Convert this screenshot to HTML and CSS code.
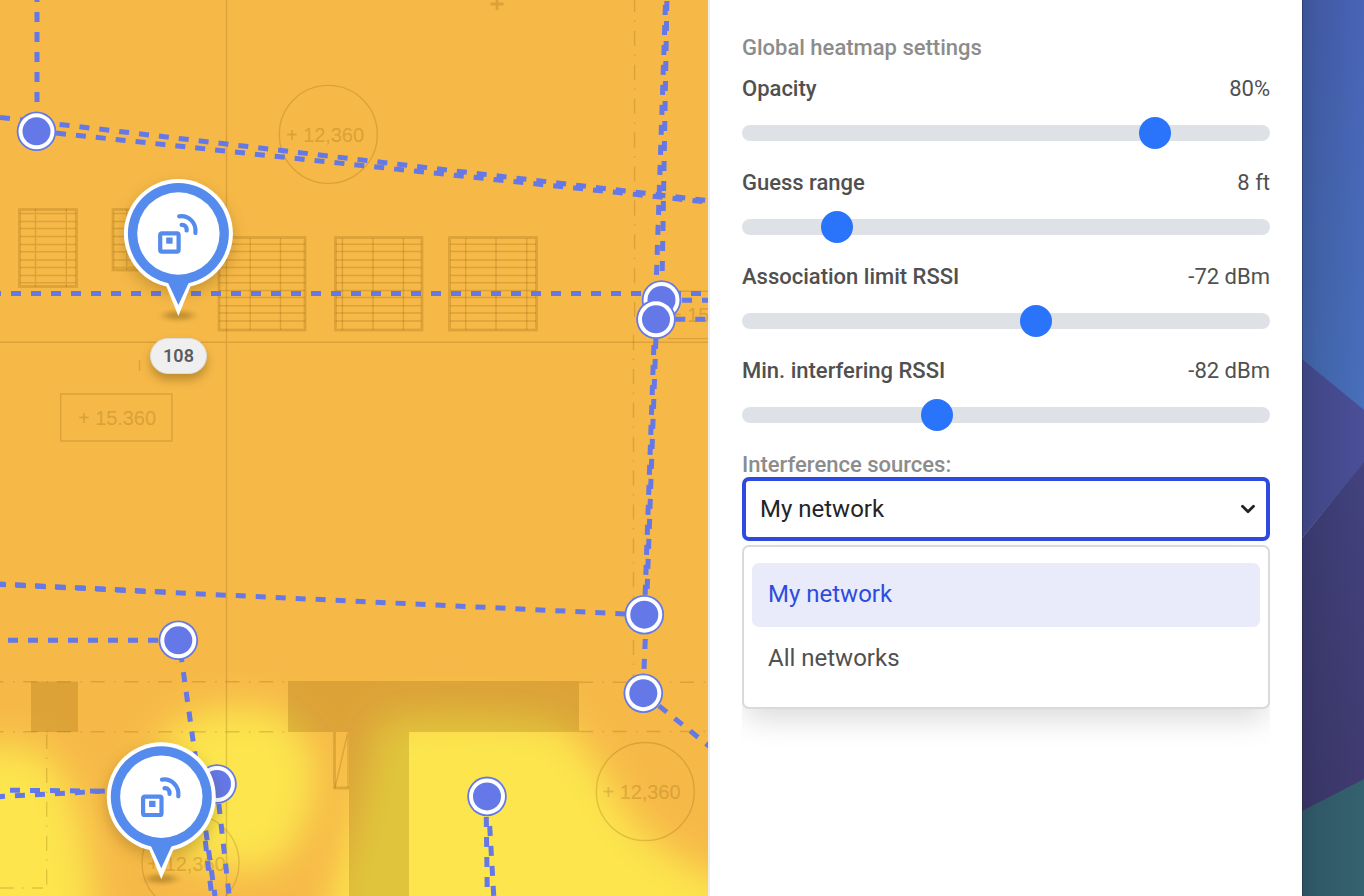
FILE: index.html
```html
<!DOCTYPE html>
<html lang="en">
<head>
<meta charset="utf-8">
<title>Heatmap settings</title>
<link rel="stylesheet" href="styles.css">
</head>
<body>
<div class="app">
  <main class="map">
    <svg class="map-canvas" viewBox="0 0 708 896" width="708" height="896">
      <defs>
        <filter id="heat" x="-30%" y="-30%" width="160%" height="160%"><feGaussianBlur stdDeviation="18"/></filter>
        <filter id="soft" x="-50%" y="-50%" width="200%" height="200%"><feGaussianBlur stdDeviation="8"/></filter>
        <filter id="tip" x="-50%" y="-100%" width="200%" height="300%"><feGaussianBlur stdDeviation="4 2"/></filter>
        <g id="node">
          <circle r="19.8" class="node-fill"/><circle r="18" fill="#fff"/><circle r="14" class="node-fill"/>
        </g>
        <g id="pin">
          <circle cy="6" r="54" fill="#5a3c00" opacity=".3" filter="url(#soft)"/>
          <ellipse cy="82" rx="15" ry="4.500" fill="#5a3c00" opacity=".32" filter="url(#tip)"/>
          <path d="M-14 48 L0 82.500 L14 48Z" fill="#fff"/>
          <circle r="54.500" fill="#fff"/>
          <circle r="50.500" class="pin-blue"/>
          <path d="M-11.500 45 L-10 50 L0 71.500 L10 50 L11.500 45Z" class="pin-blue"/>
          <circle r="41.200" fill="#fff"/>
          <g class="pin-icon">
            <rect x="-18.200" y="-.2" width="18.400" height="18.400" rx="1.600"/>
            <path d="M.7 -17.200 C10.500 -18.600 18.200 -10.500 17 -.6"/>
            <path d="M3.200 -8.600 C6.600 -8.900 8.600 -6.200 8.200 -3"/>
          </g>
          <rect x="-12.200" y="4" width="6.400" height="6.200" class="pin-blue"/>
        </g>
      </defs>

      <rect width="708" height="896" fill="#f6b948"/>
      <g filter="url(#heat)" fill="#fce54d">
        <path d="M-60 746 L30 746 Q66 765 78 812 Q92 850 96 960 H-60Z"/>
        <path d="M160 740 Q205 696 275 712 Q322 738 314 790 Q302 852 270 868 Q215 876 170 850 Q140 800 160 740Z"/>
        <path d="M376 724 Q420 704 560 722 Q600 762 618 800 Q650 855 740 886 V980 H306 Q346 860 362 790Z"/>
      </g>

      <g class="plan-block">
        <rect x="31" y="681.500" width="47" height="50.500"/>
        <path d="M288 681H579V732H409V896H349V732H288Z"/>
      </g>

      <g class="plan">
        <path d="M226.500 0V896M0 342.300H708M139.500 360V371"/>
        <path d="M672 291.300H708M668 338.600H708"/>
        <path d="M634.600 -3V318" stroke-dasharray="15 8.500 1.500 8.900"/>
        <path d="M633.500 335V680" stroke-dasharray="15 8.500 1.500 8.900"/>
        <path d="M-10.500 681.800H288M579 682.300H708M-10.500 731.700H288M579 731.500H708" stroke-dasharray="14 9.500 1.500 8.700"/>
        <path d="M46.700 734V886" stroke-dasharray="15 8.500 1.500 8.900"/>
        <path d="M0 888H14M22 888H23.500M32 888H43"/>
        <circle cx="328.300" cy="134.400" r="49"/>
        <circle cx="645.300" cy="791.500" r="49"/>
        <circle cx="190.500" cy="863" r="48.500"/>
        <rect x="60.700" y="394" width="111.300" height="47"/>
        <g class="plan-bold">
          <path d="M497 -4V10M490.500 4H503.500"/>
          <rect x="19.500" y="209.500" width="57" height="77"/>
          <rect x="113" y="209.500" width="57" height="60.500"/>
          <rect x="219" y="237.500" width="86" height="92.500"/>
          <rect x="335.500" y="237.500" width="86.500" height="92.500"/>
          <rect x="449.500" y="237.500" width="87" height="92.500"/>
          <path d="M334.500 732V788H349"/>
        </g>
        <path d="M348 732V788M335 788L347.500 734"/>
        <path d="M35.500 209V287M66.300 209V287M20 213.500H76M20 221.500H76M20 228.500H76M20 236.500H76M20 244.500H76M20 251.700H76M20 260H76M20 267.500H76M20 275.500H76M20 282.700H76"/>
        <path d="M126.700 209V270M113 213.500H170M113 221.500H170M113 228.500H170M113 236.500H170M113 244.500H170M113 251.700H170M113 260H170M113 267.500H170"/>
        <path id="rows" d="M219 244.300H305M219 251.500H305M219 260H305M219 267.500H305M219 275.500H305M219 282.700H305M219 290.500H305M219 297.500H305M219 305.700H305M219 313H305M219 321H305"/>
        <use href="#rows" x="116.500"/>
        <use href="#rows" x="231"/>
        <path d="M250.200 238V330M280.500 238V330M342.400 238V330M373 238V330M403.400 238V330M465.700 238V330M496 238V330M526.700 238V330"/>
      </g>
      <g class="plan-text">
        <text x="286" y="142.300" textLength="78">+ 12,360</text>
        <text x="78" y="424.800" textLength="78">+ 15.360</text>
        <text x="602.500" y="799" textLength="78">+ 12,360</text>
        <text x="147.500" y="870.500" textLength="78">+ 12,360</text>
        <text x="670" y="321.500" textLength="78">+ 15.360</text>
      </g>

      <g class="links">
        <path d="M37 -8V102"/>
        <path d="M0 117.400L710 200.900"/>
        <path d="M56 133.100L710 202.300"/>
        <path d="M-9 293.400H650M671 293.400H708"/>
        <path d="M666.900 1L662.200 272"/>
        <path d="M666.100 -15L656.500 275"/>
        <path d="M682 300.300H708M675.300 319.200H708"/>
        <path d="M655.900 339L646.700 602"/>
        <path d="M653.900 345L645.100 596"/>
        <path d="M-4 584.400L16 585.300L625 613.900"/>
        <path d="M-5 583.700L170 592.300"/>
        <path d="M8 640.300H160"/>
        <path d="M180.600 652.300L215 896"/>
        <path d="M205.300 841L212 898"/>
        <path d="M218.800 804L230 903"/>
        <path d="M-10 790.200L10 790.200L106 791.200"/>
        <path d="M-5 796.900L15 795.800L110 790.800"/>
        <path d="M645.300 639L643.900 671"/>
        <path d="M659 705.900L711 747.600"/>
        <path d="M486.300 817L487.300 897"/>
        <path d="M489.700 826L493.800 897"/>
      </g>
      <use href="#node" x="36.500" y="131.300"/>
      <use href="#node" x="661.500" y="300"/>
      <use href="#node" x="656" y="319.300"/>
      <use href="#node" x="644.300" y="614.700"/>
      <use href="#node" x="643.300" y="693.200"/>
      <use href="#node" x="178.300" y="640.300"/>
      <use href="#node" x="217" y="784"/>
      <use href="#node" x="487" y="796.400"/>
      <use href="#pin" x="178.400" y="233.500"/>
      <use href="#pin" x="161.300" y="796.800"/>
    </svg>
    <span class="pin-label">108</span>
  </main>

  <aside class="panel">
    <h2 class="panel-title">Global heatmap settings</h2>
    <div class="setting">
      <label class="setting-head"><b>Opacity</b><span>80%</span></label>
      <input class="slider" type="range" min="0" max="1000" value="800">
    </div>
    <div class="setting">
      <label class="setting-head"><b>Guess range</b><span>8 ft</span></label>
      <input class="slider" type="range" min="0" max="1000" value="159">
    </div>
    <div class="setting">
      <label class="setting-head"><b>Association limit RSSI</b><span>-72 dBm</span></label>
      <input class="slider" type="range" min="0" max="1000" value="560">
    </div>
    <div class="setting">
      <label class="setting-head"><b>Min. interfering RSSI</b><span>-82 dBm</span></label>
      <input class="slider" type="range" min="0" max="1000" value="361">
    </div>
    <div class="source-title">Interference sources:</div>
    <div class="select-wrap">
      <div class="select">
        <span>My network</span>
        <svg class="chevron" width="16" height="10" viewBox="0 0 16 10"><path d="M2.500 2.200L8 7.700L13.500 2.200"/></svg>
      </div>
      <ul class="menu">
        <li class="option option-active">My network</li>
        <li class="option">All networks</li>
      </ul>
    </div>
  </aside>

  <svg class="desktop" viewBox="0 0 62 896" width="62" height="896">
    <defs>
      <linearGradient id="shade"><stop offset="0" stop-color="#101828" stop-opacity=".22"/><stop offset=".25" stop-color="#101828" stop-opacity=".13"/><stop offset="1" stop-color="#101828" stop-opacity="0"/></linearGradient>
      <linearGradient id="sky" x2="0" y2="1"><stop offset="0" stop-color="#4864b6"/><stop offset="1" stop-color="#4870bc"/></linearGradient>
      <linearGradient id="deep" x2="0" y2="1"><stop offset="0" stop-color="#42427f"/><stop offset="1" stop-color="#403a70"/></linearGradient>
    </defs>
    <rect width="62" height="412" fill="url(#sky)"/>
    <path d="M0 359L62 410V463L0 538Z" fill="#4a4f98"/>
    <path d="M0 538L62 462V780L0 812Z" fill="url(#deep)"/>
    <path d="M0 811L62 779V896H0Z" fill="#356270"/>
    <rect width="62" height="896" fill="url(#shade)"/>
    <rect width="1" height="896" fill="#101828" opacity=".3"/>
  </svg>
</div>
</body>
</html>
```
FILE: styles.css
```css
* { box-sizing: border-box; }

body {
  margin: 0;
  font-family: Roboto, "Liberation Sans", sans-serif;
  color: #505050;
  -webkit-font-smoothing: antialiased;
}

.app {
  display: flex;
  width: 1364px;
  height: 896px;
  overflow: hidden;
}

.map {
  position: relative;
  flex: 0 0 710px;
  border-right: 2px solid #ededed;
}

.map-canvas,
.desktop { display: block; }

.node-fill { fill: #6478e8; }
.pin-blue { fill: #558bec; }

.pin-icon {
  fill: none;
  stroke: #558bec;
  stroke-width: 4.2;
  stroke-linecap: round;
}

.plan-block { fill: rgba(128, 80, 0, .22); }

.plan {
  fill: none;
  stroke: rgba(128, 80, 0, .22);
  stroke-width: 1.4;
}

.plan-bold { stroke-width: 2.8; }

.plan-text {
  font: 20px "Liberation Sans", sans-serif;
  fill: rgba(128, 80, 0, .22);
  stroke: rgba(128, 80, 0, .1);
  stroke-width: .5;
}

.links {
  fill: none;
  stroke: #6478e8;
  stroke-width: 5;
  stroke-dasharray: 10 10;
}

.pin-label {
  position: absolute;
  left: 150px;
  top: 338px;
  width: 57px;
  height: 36px;
  border: 1px solid #dcdcdc;
  border-radius: 18px;
  background: #efefef;
  box-shadow: 0 6px 10px rgba(90, 60, 0, .35);
  font-size: 18px;
  font-weight: 600;
  line-height: 33px;
  text-align: center;
  color: #5c5c5c;
}

.panel {
  flex: 0 0 592px;
  padding: 32px;
  background: #fff;
}

.panel-title,
.source-title {
  margin: 0;
  font-size: 22px;
  font-weight: 500;
  line-height: 32px;
  color: #8c8c8c;
}

.setting {
  height: 94px;
  padding-top: 8px;
}

.setting-head {
  display: flex;
  justify-content: space-between;
  font-size: 22px;
  line-height: 34px;
}

.setting-head b { font-weight: 500; }

.slider {
  display: block;
  width: 100%;
  height: 32px;
  margin: 11px 0 0;
  appearance: none;
  background: transparent;
}

.slider::-webkit-slider-runnable-track {
  height: 16px;
  border-radius: 8px;
  background: #dee2e6;
}

.slider::-webkit-slider-thumb {
  appearance: none;
  width: 32px;
  height: 32px;
  margin-top: -8px;
  border-radius: 50%;
  background: #2a74fb;
}

.source-title {
  height: 37px;
  padding-top: 9px;
}

.select-wrap {
  clip-path: inset(0 0 -60px 0);
}

.select {
  display: flex;
  align-items: center;
  justify-content: space-between;
  height: 64px;
  padding: 0 10px 0 14px;
  border: 4px solid #2f4bdf;
  border-radius: 7px;
  font-size: 24px;
  color: #212529;
}

.chevron {
  fill: none;
  stroke: #212529;
  stroke-width: 2.8;
  stroke-linecap: round;
  stroke-linejoin: round;
}

.menu {
  height: 164px;
  margin: 4px 0 0;
  padding: 16px 8px;
  border: 2px solid #dadada;
  border-radius: 7px;
  background: #fff;
  box-shadow: 0 14px 30px -4px rgba(0, 0, 0, .15);
  list-style: none;
}

.option {
  height: 64px;
  padding: 0 16px;
  border-radius: 7px;
  font-size: 24px;
  line-height: 62px;
}

.option-active {
  background: #e9ebfa;
  color: #2f4bdf;
}
```
